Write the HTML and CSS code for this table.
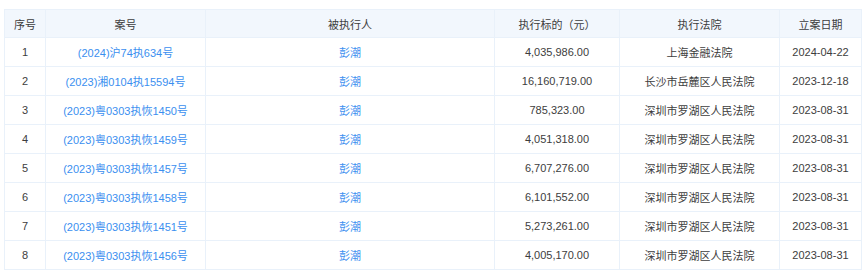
FILE: index.html
```html
<!DOCTYPE html>
<html lang="zh-CN">
<head>
  <meta charset="UTF-8" />
  <title>执行信息</title>
  <link rel="stylesheet" href="styles.css">
</head>
<body>
  <table class="case-table">
    <colgroup>
      <col class="col-no">
      <col class="col-case">
      <col class="col-person">
      <col class="col-amount">
      <col class="col-court">
      <col class="col-date">
    </colgroup>
    <thead>
      <tr>
        <th>序号</th>
        <th>案号</th>
        <th>被执行人</th>
        <th>执行标的（元）</th>
        <th>执行法院</th>
        <th>立案日期</th>
      </tr>
    </thead>
    <tbody>
      <tr>
        <td>1</td>
        <td><a class="link" href="#">(2024)沪74执634号</a></td>
        <td><a class="link" href="#">彭潮</a></td>
        <td>4,035,986.00</td>
        <td>上海金融法院</td>
        <td>2024-04-22</td>
      </tr>
      <tr>
        <td>2</td>
        <td><a class="link" href="#">(2023)湘0104执15594号</a></td>
        <td><a class="link" href="#">彭潮</a></td>
        <td>16,160,719.00</td>
        <td>长沙市岳麓区人民法院</td>
        <td>2023-12-18</td>
      </tr>
      <tr>
        <td>3</td>
        <td><a class="link" href="#">(2023)粤0303执恢1450号</a></td>
        <td><a class="link" href="#">彭潮</a></td>
        <td>785,323.00</td>
        <td>深圳市罗湖区人民法院</td>
        <td>2023-08-31</td>
      </tr>
      <tr>
        <td>4</td>
        <td><a class="link" href="#">(2023)粤0303执恢1459号</a></td>
        <td><a class="link" href="#">彭潮</a></td>
        <td>4,051,318.00</td>
        <td>深圳市罗湖区人民法院</td>
        <td>2023-08-31</td>
      </tr>
      <tr>
        <td>5</td>
        <td><a class="link" href="#">(2023)粤0303执恢1457号</a></td>
        <td><a class="link" href="#">彭潮</a></td>
        <td>6,707,276.00</td>
        <td>深圳市罗湖区人民法院</td>
        <td>2023-08-31</td>
      </tr>
      <tr>
        <td>6</td>
        <td><a class="link" href="#">(2023)粤0303执恢1458号</a></td>
        <td><a class="link" href="#">彭潮</a></td>
        <td>6,101,552.00</td>
        <td>深圳市罗湖区人民法院</td>
        <td>2023-08-31</td>
      </tr>
      <tr>
        <td>7</td>
        <td><a class="link" href="#">(2023)粤0303执恢1451号</a></td>
        <td><a class="link" href="#">彭潮</a></td>
        <td>5,273,261.00</td>
        <td>深圳市罗湖区人民法院</td>
        <td>2023-08-31</td>
      </tr>
      <tr>
        <td>8</td>
        <td><a class="link" href="#">(2023)粤0303执恢1456号</a></td>
        <td><a class="link" href="#">彭潮</a></td>
        <td>4,005,170.00</td>
        <td>深圳市罗湖区人民法院</td>
        <td>2023-08-31</td>
      </tr>
    </tbody>
  </table>
</body>
</html>
```

FILE: styles.css
```css
body {
  margin: 0;
  padding: 9px 4px 0 4px;
  background: #ffffff;
  font-family: "Liberation Sans", "Noto Sans CJK SC", sans-serif;
  font-size: 11px;
  color: #3d3d3d;
}

.case-table {
  width: 857px;
  border-collapse: collapse;
  table-layout: fixed;
}

.col-no { width: 41px; }
.col-case { width: 160px; }
.col-person { width: 289px; }
.col-amount { width: 125px; }
.col-court { width: 160px; }
.col-date { width: 82px; }

.case-table th,
.case-table td {
  border: 1px solid #e9f1fa;
  text-align: center;
  padding: 0 4px;
  white-space: nowrap;
}

.case-table th {
  height: 27px;
  background-color: #f2f7fd;
  font-weight: normal;
  color: #3d3d3d;
}

.case-table td {
  height: 28px;
}

.link {
  color: #3b8ff0;
  text-decoration: none;
}
```
